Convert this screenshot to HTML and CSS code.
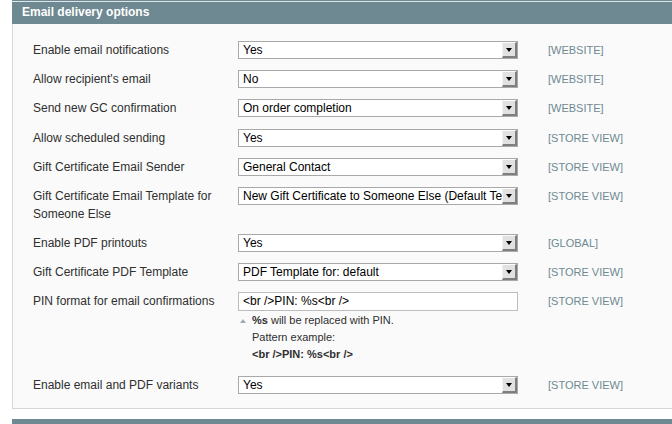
FILE: index.html
```html
<!DOCTYPE html>
<html lang="en">
<head>
    <meta charset="UTF-8">
    <title>Email delivery options</title>
    <link rel="stylesheet" href="styles.css">
</head>
<body>
    <div class="section">
        <div class="section-head">
            <h4>Email delivery options</h4>
        </div>

        <div class="fieldset">
            <div class="row">
                <div class="label">Enable email notifications</div>
                <div class="value">
                    <div class="select"><span>Yes</span><b class="btn"></b></div>
                </div>
                <div class="scope">[WEBSITE]</div>
            </div>

            <div class="row">
                <div class="label">Allow recipient's email</div>
                <div class="value">
                    <div class="select"><span>No</span><b class="btn"></b></div>
                </div>
                <div class="scope">[WEBSITE]</div>
            </div>

            <div class="row">
                <div class="label">Send new GC confirmation</div>
                <div class="value">
                    <div class="select"><span>On order completion</span><b class="btn"></b></div>
                </div>
                <div class="scope">[WEBSITE]</div>
            </div>

            <div class="row">
                <div class="label">Allow scheduled sending</div>
                <div class="value">
                    <div class="select"><span>Yes</span><b class="btn"></b></div>
                </div>
                <div class="scope">[STORE VIEW]</div>
            </div>

            <div class="row">
                <div class="label">Gift Certificate Email Sender</div>
                <div class="value">
                    <div class="select"><span>General Contact</span><b class="btn"></b></div>
                </div>
                <div class="scope">[STORE VIEW]</div>
            </div>

            <div class="row">
                <div class="label">Gift Certificate Email Template for Someone Else</div>
                <div class="value">
                    <div class="select"><span>New Gift Certificate to Someone Else (Default Te</span><b class="btn"></b></div>
                </div>
                <div class="scope">[STORE VIEW]</div>
            </div>

            <div class="row">
                <div class="label">Enable PDF printouts</div>
                <div class="value">
                    <div class="select"><span>Yes</span><b class="btn"></b></div>
                </div>
                <div class="scope">[GLOBAL]</div>
            </div>

            <div class="row">
                <div class="label">Gift Certificate PDF Template</div>
                <div class="value">
                    <div class="select"><span>PDF Template for: default</span><b class="btn"></b></div>
                </div>
                <div class="scope">[STORE VIEW]</div>
            </div>

            <div class="row">
                <div class="label">PIN format for email confirmations</div>
                <div class="value">
                    <div class="input-text">&lt;br /&gt;PIN: %s&lt;br /&gt;</div>
                    <div class="note">
                        <p><i class="arrow"></i><strong>%s</strong> will be replaced with PIN.</p>
                        <p>Pattern example:</p>
                        <p><strong>&lt;br /&gt;PIN: %s&lt;br /&gt;</strong></p>
                    </div>
                </div>
                <div class="scope">[STORE VIEW]</div>
            </div>

            <div class="row">
                <div class="label">Enable email and PDF variants</div>
                <div class="value">
                    <div class="select"><span>Yes</span><b class="btn"></b></div>
                </div>
                <div class="scope">[STORE VIEW]</div>
            </div>
        </div>

        <div class="section-head next"></div>
    </div>
</body>
</html>
```

FILE: styles.css
```css
* {
    margin: 0;
    padding: 0;
    box-sizing: border-box;
}

body {
    font-family: 'Liberation Sans', Arial, Helvetica, sans-serif;
    font-size: 12px;
    color: #2f2f2f;
    background: #fff;
    overflow: hidden;
}

.section {
    margin-left: 12px;
    width: 680px;
}

.section-head {
    background: #6f8992;
    height: 24px;
    padding: 0 10px;
    box-shadow: inset 0 1px 0 #6f8992, inset 0 2px 0 #dfe6e8;
}

.section-head h4 {
    color: #fff;
    font-size: 12px;
    font-weight: bold;
    line-height: 25px;
}

.section-head.next {
    margin-top: 10px;
    box-shadow: none;
}

.fieldset {
    background: #fafafa;
    border-left: 1px solid #d6d6d6;
    border-bottom: 1px solid #d6d6d6;
    padding: 11.4px 0 8.6px 20px;
}

.row {
    display: grid;
    grid-template-columns: 205px 280px auto;
    padding: 5.6px 0;
    align-items: start;
}

.label {
    line-height: 18px;
    padding-right: 10px;
}

.scope {
    padding-left: 30px;
    font-size: 11px;
    line-height: 18px;
    color: #6f8992;
}

.select {
    display: flex;
    height: 18px;
    background: #fff;
    border: 1px solid #a9a9a9;
    color: #000;
    font-size: 12px;
    line-height: 16px;
}

.select span {
    flex: 1;
    padding-left: 4px;
    white-space: nowrap;
    overflow: hidden;
}

.select .btn {
    width: 15px;
    height: 16px;
    background: #e1e1e1;
    border-top: 1px solid #fdfdfd;
    border-left: 1px solid #f2f2f2;
    border-right: 2px solid #7e7e7e;
    border-bottom: 2px solid #7e7e7e;
    display: flex;
    align-items: center;
    justify-content: center;
}

.select .btn:after {
    content: "";
    border-left: 3.5px solid transparent;
    border-right: 3.5px solid transparent;
    border-top: 4px solid #000;
    margin-top: 1px;
}

.input-text {
    height: 19px;
    background: #fff;
    border: 1px solid #bdbdbd;
    padding-left: 4px;
    color: #000;
    font-size: 12px;
    line-height: 17px;
}

.note {
    padding: 1px 0 0 14px;
    margin-bottom: 1px;
    font-size: 11px;
    line-height: 17px;
    color: #2f2f2f;
}

.note .arrow {
    display: inline-block;
    vertical-align: middle;
    margin-left: -12px;
    margin-right: 6px;
    margin-top: -2px;
    border-left: 3px solid transparent;
    border-right: 3px solid transparent;
    border-bottom: 4px solid #9fabb0;
}
```
